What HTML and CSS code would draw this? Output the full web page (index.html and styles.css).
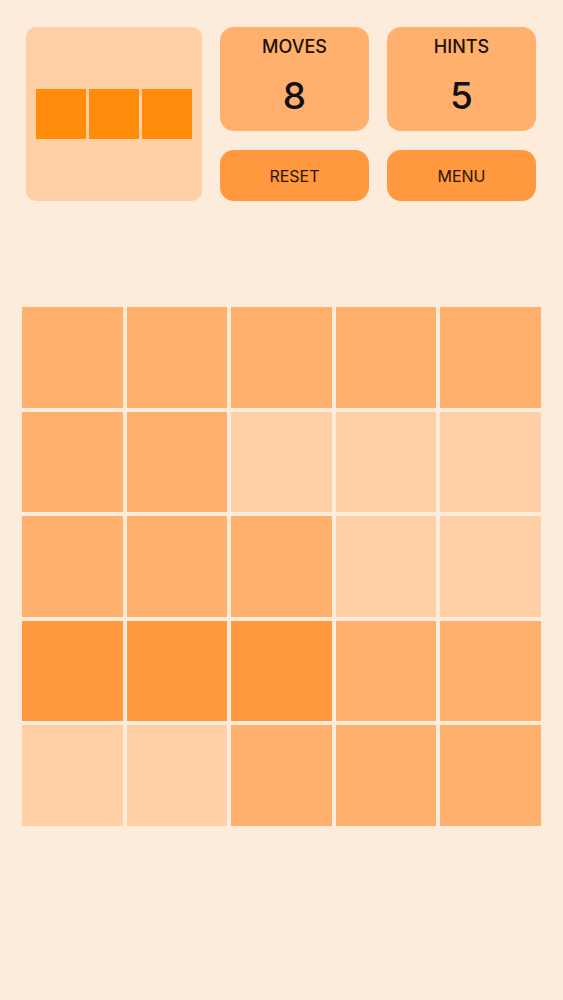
FILE: index.html
```html
<!DOCTYPE html>
<html>
<head>
<meta charset="utf-8">
<link rel="stylesheet" href="styles.css">
</head>
<body>
<div class="page">
  <div class="header">
    <div class="preview">
      <div class="piece">
        <div class="pcell"></div>
        <div class="pcell"></div>
        <div class="pcell"></div>
      </div>
    </div>
    <div class="controls">
      <div class="stat">
        <div class="stat-label">MOVES</div>
        <div class="stat-value">8</div>
      </div>
      <div class="stat">
        <div class="stat-label">HINTS</div>
        <div class="stat-value">5</div>
      </div>
      <div class="btn">RESET</div>
      <div class="btn">MENU</div>
    </div>
  </div>
  <div class="board">
    <div class="cell m"></div><div class="cell m"></div><div class="cell m"></div><div class="cell m"></div><div class="cell m"></div>
    <div class="cell m"></div><div class="cell m"></div><div class="cell l"></div><div class="cell l"></div><div class="cell l"></div>
    <div class="cell m"></div><div class="cell m"></div><div class="cell m"></div><div class="cell l"></div><div class="cell l"></div>
    <div class="cell d"></div><div class="cell d"></div><div class="cell d"></div><div class="cell m"></div><div class="cell m"></div>
    <div class="cell l"></div><div class="cell l"></div><div class="cell m"></div><div class="cell m"></div><div class="cell m"></div>
  </div>
</div>
</body>
</html>
```
FILE: styles.css
```css
html, body {
  margin: 0;
  padding: 0;
  background: #fdebdc;
  font-family: Inter, "Noto Sans", "Liberation Sans", sans-serif;
}
.page {
  width: 563px;
  height: 1000px;
  box-sizing: border-box;
  padding-top: 27px;
}
.header {
  display: flex;
  gap: 18px;
  padding-left: 26px;
}
.preview {
  width: 176px;
  height: 174px;
  background: #ffcfa6;
  border-radius: 10px;
  display: flex;
  align-items: center;
  justify-content: center;
}
.piece {
  display: flex;
  gap: 3px;
}
.pcell {
  width: 50px;
  height: 50px;
  background: #ff8c0a;
}
.controls {
  display: grid;
  grid-template-columns: 149px 149px;
  grid-template-rows: 104px 51px;
  column-gap: 18px;
  row-gap: 19px;
}
.stat {
  background: #ffb06d;
  border-radius: 14px;
  display: flex;
  flex-direction: column;
  align-items: center;
}
.stat-label {
  margin-top: 10px;
  font-size: 18px;
  font-weight: 500;
  color: #1a1005;
  line-height: 20px;
}
.stat-value {
  margin-top: 18px;
  font-size: 37px;
  font-weight: 500;
  color: #111;
  line-height: 42px;
}
.btn {
  background: #ff983f;
  border-radius: 14px;
  display: flex;
  align-items: center;
  justify-content: center;
  font-size: 16px;
  color: #2a1505;
}
.board {
  margin-top: 106px;
  margin-left: 22px;
  width: 519px;
  height: 519px;
  display: grid;
  grid-template-columns: repeat(5, 1fr);
  grid-template-rows: repeat(5, 1fr);
  gap: 4px;
}
.cell.m { background: #ffb06d; }
.cell.l { background: #ffcfa5; }
.cell.d { background: #ff983e; }
```
